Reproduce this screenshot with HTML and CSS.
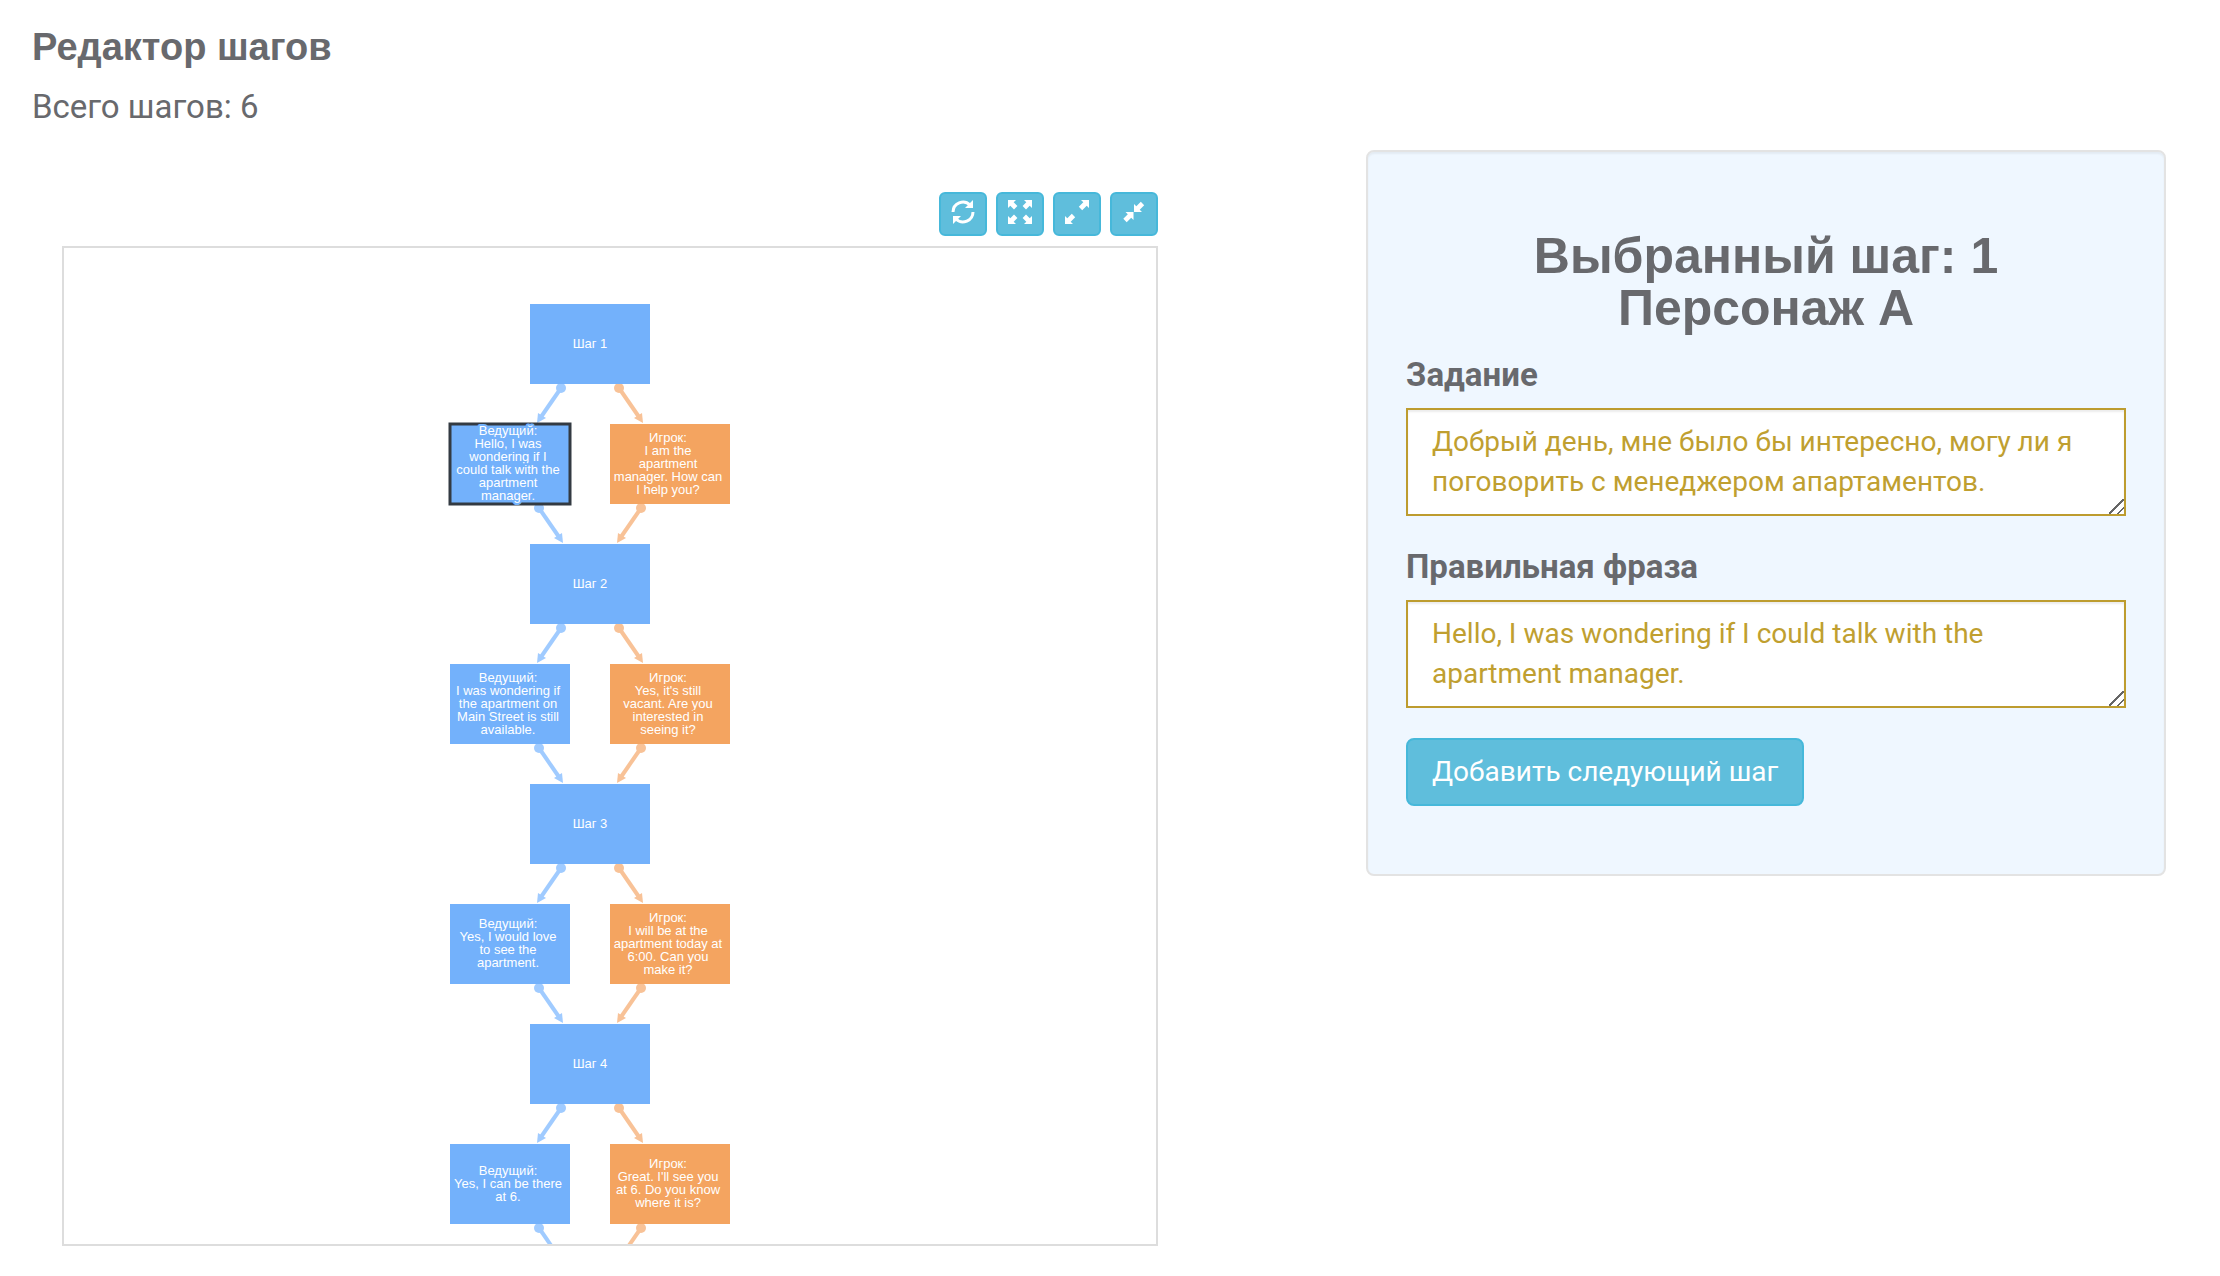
FILE: index.html
```html
<!DOCTYPE html>
<html lang="ru">
<head>
<meta charset="utf-8">
<title>Редактор шагов</title>
<link rel="stylesheet" href="styles.css">
</head>
<body>
<main class="page">
  <header class="page-header">
    <h1 class="page-title">Редактор шагов</h1>
    <p class="page-count">Всего шагов: 6</p>
  </header>

  <div class="editor">
    <section class="graph">
      <div class="toolbar">
        <button class="btn btn-icon" type="button" aria-label="Обновить">
          <svg class="icon" viewBox="0 0 24 24"><path class="icon-arc" d="M2 12A10 10 0 0 1 19 5M22 12A10 10 0 0 1 5 19"/><path d="M22 0v8h-8zM2 24v-8h8z"/></svg>
        </button>
        <button class="btn btn-icon" type="button" aria-label="Показать всё">
          <svg class="icon" viewBox="0 0 24 24"><path d="M0 0h8L5.700 2.300l3.700 3.700-3.400 3.400-3.700-3.700L0 8zM24 0v8l-2.300-2.300-3.700 3.700-3.400-3.400 3.700-3.700L16 0zM0 24v-8l2.300 2.300 3.700-3.700 3.400 3.400-3.700 3.700L8 24zM24 24h-8l2.300-2.300-3.700-3.700 3.400-3.400 3.700 3.700L24 16z"/></svg>
        </button>
        <button class="btn btn-icon" type="button" aria-label="Увеличить">
          <svg class="icon" viewBox="0 0 24 24"><path d="M24 0v8l-2.300-2.300-4.500 4.500-3.400-3.400 4.500-4.500L16 0zM0 24v-8l2.300 2.300 4.500-4.500 3.400 3.400-4.500 4.500L8 24z"/></svg>
        </button>
        <button class="btn btn-icon" type="button" aria-label="Уменьшить">
          <svg class="icon" viewBox="0 0 24 24"><path d="M12 12V4l2.300 2.300 4.500-4.500 3.400 3.400-4.500 4.500L20 12zM11.500 12v8l-2.300-2.300-4.500 4.500-3.400-3.400 4.500-4.500L3.500 12z"/></svg>
        </button>
      </div>

      <div class="canvas">
        <svg class="diagram" viewBox="0 0 1092 996" preserveAspectRatio="xMidYMin meet">
          <defs>
            <g id="links">
              <g class="link-host">
                <circle cx="497" cy="140" r="5"/><path class="link-line" d="M497 140L477 169"/><path d="M473 175L474 165L482 170z"/>
                <circle cx="475" cy="260" r="5"/><path class="link-line" d="M475 260L495 289"/><path d="M499 295L498 285L490 290z"/>
              </g>
              <g class="link-player">
                <circle cx="555" cy="140" r="5"/><path class="link-line" d="M555 140L575 169"/><path d="M579 175L578 165L570 170z"/>
                <circle cx="577" cy="260" r="5"/><path class="link-line" d="M577 260L557 289"/><path d="M553 295L554 285L562 290z"/>
              </g>
            </g>
          </defs>

          <g>
            <use href="#links"/>
            <rect class="host" x="466" y="56" width="120" height="80"/>
            <rect class="host selected" x="386" y="176" width="120" height="80"/>
            <rect class="player" x="546" y="176" width="120" height="80"/>
            <text class="label host-label"><tspan x="526" y="100">Шаг 1</tspan></text>
            <text class="label host-label"><tspan x="444" y="187">Ведущий:</tspan><tspan x="444" dy="13">Hello, I was</tspan><tspan x="444" dy="13">wondering if I</tspan><tspan x="444" dy="13">could talk with the</tspan><tspan x="444" dy="13">apartment</tspan><tspan x="444" dy="13">manager.</tspan></text>
            <text class="label player-label"><tspan x="604" y="194">Игрок:</tspan><tspan x="604" dy="13">I am the</tspan><tspan x="604" dy="13">apartment</tspan><tspan x="604" dy="13">manager. How can</tspan><tspan x="604" dy="13">I help you?</tspan></text>
          </g>

          <g transform="translate(0 240)">
            <use href="#links"/>
            <rect class="host" x="466" y="56" width="120" height="80"/>
            <rect class="host" x="386" y="176" width="120" height="80"/>
            <rect class="player" x="546" y="176" width="120" height="80"/>
            <text class="label host-label"><tspan x="526" y="100">Шаг 2</tspan></text>
            <text class="label host-label"><tspan x="444" y="194">Ведущий:</tspan><tspan x="444" dy="13">I was wondering if</tspan><tspan x="444" dy="13">the apartment on</tspan><tspan x="444" dy="13">Main Street is still</tspan><tspan x="444" dy="13">available.</tspan></text>
            <text class="label player-label"><tspan x="604" y="194">Игрок:</tspan><tspan x="604" dy="13">Yes, it's still</tspan><tspan x="604" dy="13">vacant. Are you</tspan><tspan x="604" dy="13">interested in</tspan><tspan x="604" dy="13">seeing it?</tspan></text>
          </g>

          <g transform="translate(0 480)">
            <use href="#links"/>
            <rect class="host" x="466" y="56" width="120" height="80"/>
            <rect class="host" x="386" y="176" width="120" height="80"/>
            <rect class="player" x="546" y="176" width="120" height="80"/>
            <text class="label host-label"><tspan x="526" y="100">Шаг 3</tspan></text>
            <text class="label host-label"><tspan x="444" y="200">Ведущий:</tspan><tspan x="444" dy="13">Yes, I would love</tspan><tspan x="444" dy="13">to see the</tspan><tspan x="444" dy="13">apartment.</tspan></text>
            <text class="label player-label"><tspan x="604" y="194">Игрок:</tspan><tspan x="604" dy="13">I will be at the</tspan><tspan x="604" dy="13">apartment today at</tspan><tspan x="604" dy="13">6:00. Can you</tspan><tspan x="604" dy="13">make it?</tspan></text>
          </g>

          <g transform="translate(0 720)">
            <use href="#links"/>
            <rect class="host" x="466" y="56" width="120" height="80"/>
            <rect class="host" x="386" y="176" width="120" height="80"/>
            <rect class="player" x="546" y="176" width="120" height="80"/>
            <text class="label host-label"><tspan x="526" y="100">Шаг 4</tspan></text>
            <text class="label host-label"><tspan x="444" y="207">Ведущий:</tspan><tspan x="444" dy="13">Yes, I can be there</tspan><tspan x="444" dy="13">at 6.</tspan></text>
            <text class="label player-label"><tspan x="604" y="200">Игрок:</tspan><tspan x="604" dy="13">Great. I'll see you</tspan><tspan x="604" dy="13">at 6. Do you know</tspan><tspan x="604" dy="13">where it is?</tspan></text>
          </g>
        </svg>
      </div>
    </section>

    <form class="panel">
      <h2 class="panel-title">Выбранный шаг: 1<br>Персонаж A</h2>
      <div class="field">
        <label class="field-label" for="task">Задание</label>
        <textarea class="field-input" id="task" rows="2">Добрый день, мне было бы интересно, могу ли я поговорить с менеджером апартаментов.</textarea>
      </div>
      <div class="field">
        <label class="field-label" for="phrase">Правильная фраза</label>
        <textarea class="field-input" id="phrase" rows="2">Hello, I was wondering if I could talk with the apartment manager.</textarea>
      </div>
      <button class="btn btn-add" type="button">Добавить следующий шаг</button>
    </form>
  </div>
</main>
</body>
</html>
```
FILE: styles.css
```css
* {
  box-sizing: border-box;
}

body {
  margin: 0;
  background: #fff;
  color: #68696d;
  font-family: Roboto, sans-serif;
  font-size: 33px;
  line-height: 44px;
}

.page {
  padding: 25px 54px 30px 32px;
}

.page-header {
  display: flex;
  flex-direction: column;
  gap: 16px;
  margin-bottom: 21px;
}

.page-title,
.page-count,
.panel-title {
  margin: 0;
}

.page-title,
.panel-title {
  font-family: "Liberation Sans", Arial, sans-serif;
  font-weight: 700;
}

.page-title {
  font-size: 38px;
}

.editor {
  display: grid;
  grid-template-columns: 1096fr 800fr;
  gap: 208px;
  align-items: start;
  padding-left: 30px;
}

.graph {
  padding-top: 42px;
}

.toolbar {
  display: flex;
  justify-content: flex-end;
  gap: 9px;
  margin-bottom: 10px;
}

.btn {
  border: 2px solid #46b8da;
  border-radius: 8px;
  background: #5fbedc;
  color: #fff;
  font: 28px/40px Roboto, sans-serif;
  cursor: pointer;
}

.btn-icon {
  display: flex;
  justify-content: center;
  width: 48px;
  height: 44px;
  padding: 6px 0;
  border-radius: 6px;
}

.icon {
  width: 24px;
  height: 24px;
  fill: #fff;
}

.icon-arc {
  fill: none;
  stroke: #fff;
  stroke-width: 3;
}

.canvas {
  border: 2px solid #ddd;
}

.diagram {
  display: block;
  width: 100%;
}

.host {
  fill: #73b1fb;
}

.player {
  fill: #f4a460;
}

.selected {
  stroke: #333a42;
  stroke-width: 3;
}

.link-line {
  fill: none;
  stroke-width: 4;
}

.link-host {
  fill: #a0cbff;
}

.link-host .link-line {
  stroke: #a0cbff;
}

.link-player {
  fill: #f8c297;
}

.link-player .link-line {
  stroke: #f8c297;
}

.label {
  fill: #fff;
  font: 13px "Liberation Sans", Arial, sans-serif;
  text-anchor: middle;
  paint-order: stroke;
  stroke-width: 4;
  stroke-linejoin: round;
}

.host-label {
  stroke: #73b1fb;
}

.player-label {
  stroke: #f4a460;
}

.panel {
  display: flex;
  flex-direction: column;
  align-items: flex-start;
  gap: 30px;
  padding: 78px 38px 68px;
  border: 2px solid #e3e3e3;
  border-radius: 8px;
  background: #eff7ff;
  box-shadow: inset 0 2px 2px rgba(0, 0, 0, 0.05);
}

.panel-title {
  align-self: stretch;
  margin-bottom: -10px;
  font-size: 50px;
  line-height: 52px;
  text-align: center;
}

.field {
  display: flex;
  flex-direction: column;
  gap: 12px;
  width: 100%;
}

.field-label {
  font-weight: 700;
  line-height: 42px;
}

.field-input {
  width: 100%;
  padding: 12px 24px;
  border: 2px solid #bd9c2f;
  border-radius: 0;
  background: #fff;
  box-shadow: inset 0 2px 2px rgba(0, 0, 0, 0.08);
  color: #c09f30;
  font: 28px/40px Roboto, sans-serif;
  resize: vertical;
}

/* Two dark diagonal strokes in the resize corner */
.field-input::-webkit-resizer {
  background: linear-gradient(135deg, transparent 45%, #666 45%, #666 54%, transparent 54%, transparent 74%, #666 74%, #666 83%, transparent 83%);
}

.btn-add {
  padding: 12px 24px;
}
```
